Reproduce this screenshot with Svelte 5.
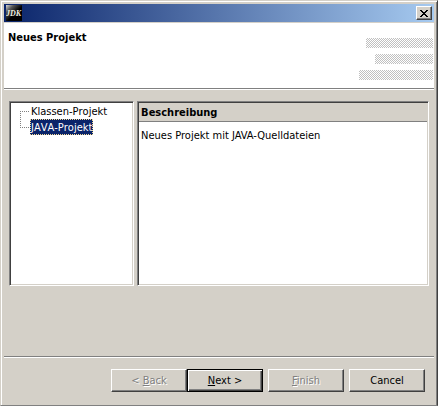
<script lang="ts">
	interface ProjectType {
		name: string;
		description: string;
	}

	const projectTypes: ProjectType[] = [
		{ name: 'Klassen-Projekt', description: 'Neues Projekt mit Klassen' },
		{ name: 'JAVA-Projekt', description: 'Neues Projekt mit JAVA-Quelldateien' },
	];

	let selected = $state(1);
	let description = $derived(projectTypes[selected].description);
</script>

<main class="window">
	<div class="title-bar">
		<svg class="app-icon" width="16" height="16" viewBox="0 0 16 16" aria-hidden="true">
			<defs>
				<linearGradient id="icon-shade" x1="0" y1="0" x2="1" y2="1">
					<stop offset="0" stop-color="#d8d8d8" />
					<stop offset="0.25" stop-color="#555" />
					<stop offset="0.55" stop-color="#000" />
				</linearGradient>
			</defs>
			<rect width="16" height="16" fill="url(#icon-shade)" />
			<text x="0" y="11" class="icon-text">JDK</text>
		</svg>
		<button class="close" type="button" aria-label="Close">
			<svg width="8" height="7" viewBox="0 0 8 7" shape-rendering="crispEdges" aria-hidden="true">
				<path d="M0 0h2v1h1v1h2v-1h1v-1h2v1h-1v1h-1v1h-1v1h1v1h1v1h1v1h-2v-1h-1v-1h-2v1h-1v1h-2v-1h1v-1h1v-1h1v-1h-1v-1h-1v-1h-1z" />
			</svg>
		</button>
	</div>

	<header class="banner">
		<h1>Neues Projekt</h1>
		<div class="stripes" aria-hidden="true">
			<span class="stripe medium"></span>
			<span class="stripe short"></span>
			<span class="stripe long"></span>
		</div>
	</header>

	<div class="content">
		<ul class="tree sunken">
			{#each projectTypes as type, i}
				<li>
					<svg width="10" height="16" viewBox="0 0 10 16" shape-rendering="crispEdges" aria-hidden="true">
						<path d="M0 8.5h10" />
						{#if i > 0}<path d="M0.5 0v8" />{/if}
						{#if i < projectTypes.length - 1}<path d="M0.5 8v8" />{/if}
					</svg>
					<button type="button" class:selected={i === selected} onclick={() => (selected = i)}>{type.name}</button>
				</li>
			{/each}
		</ul>
		<section class="details sunken">
			<h2>Beschreibung</h2>
			<p>{description}</p>
		</section>
	</div>

	<footer class="actions">
		<div class="pair">
			<button type="button" disabled>&lt; <u>B</u>ack</button>
			<button type="button" class="default"><u>N</u>ext &gt;</button>
		</div>
		<button type="button" disabled><u>F</u>inish</button>
		<button type="button">Cancel</button>
	</footer>
</main>

<style>
	:global(body) {
		background: #d4d0c8;
	}

	.window {
		box-sizing: border-box;
		min-height: 100vh;
		display: flex;
		flex-direction: column;
		padding: 2px 2px 0;
		border: 1px solid;
		border-color: #d4d0c8 #404040 #808080 #d4d0c8;
		box-shadow: inset 1px 1px #fff, inset -1px 0 #808080;
		background: #d4d0c8;
		color: #000;
		font-family: 'DejaVu Sans Condensed', Tahoma, sans-serif;
		font-size: 11px;
		line-height: 14px;
	}

	.title-bar {
		display: flex;
		align-items: center;
		justify-content: space-between;
		height: 18px;
		margin: 1px 1px 0;
		padding: 0 2px;
		background: linear-gradient(to right, #0a246a, #a6caf0);
	}

	.icon-text {
		font: italic bold 8px 'Liberation Serif', serif;
		fill: #f0f0e0;
	}

	button {
		box-sizing: border-box;
		padding: 0;
		border: 1px solid;
		border-color: #fff #404040 #404040 #fff;
		border-radius: 0;
		box-shadow: inset -1px -1px #808080;
		background: #d4d0c8;
		color: #000;
		font: inherit;
	}

	.close {
		display: flex;
		align-items: center;
		justify-content: center;
		width: 16px;
		height: 14px;
	}

	.banner {
		display: flex;
		justify-content: space-between;
		margin: 1px 1px 0;
		padding: 8px 1px 8px 4px;
		border-bottom: 1px solid #808080;
		box-shadow: 0 1px #fff;
		background: #fff;
	}

	h1,
	h2 {
		margin: 0;
		font-size: 11px;
		font-weight: bold;
	}

	.stripes {
		display: flex;
		flex-direction: column;
		align-items: flex-end;
		gap: 6px;
		padding-top: 7px;
	}

	.stripe {
		height: 10px;
		background: repeating-conic-gradient(#c0c0c0 0 25%, #fff 0 50%) 0 0 / 2px 2px;
	}

	.short {
		width: 58px;
	}

	.medium {
		width: 67px;
	}

	.long {
		width: 74px;
	}

	.content {
		display: grid;
		grid-template-columns: 3fr 7fr;
		gap: 3px;
		flex: 1;
		padding: 12px 6px 70px;
	}

	.sunken {
		border: 1px solid;
		border-color: #808080 #fff #fff #808080;
		box-shadow: inset 1px 1px #404040, inset -1px -1px #d4d0c8;
		background: #fff;
	}

	.tree {
		margin: 0;
		padding: 1px 1px 1px 10px;
		font-kerning: none;
		list-style: none;
	}

	.tree li {
		display: flex;
		height: 16px;
	}

	.tree path {
		fill: none;
		stroke: #808080;
		stroke-dasharray: 1 1;
	}

	.tree button {
		padding: 1px 0 0;
		border: 1px dotted transparent;
		box-shadow: none;
		background: none;
		line-height: 13px;
		white-space: nowrap;
	}

	.tree .selected {
		border-color: #f5db95;
		background: #0a246a;
		color: #fff;
	}

	.details {
		padding: 1px;
	}

	h2 {
		padding: 3px 2px 1px;
		border-bottom: 1px solid #808080;
		background: #d4d0c8;
	}

	.details p {
		margin: 0;
		padding: 7px 2px;
	}

	.actions {
		display: flex;
		justify-content: flex-end;
		gap: 5px;
		margin: 0 1px;
		padding: 12px 9px 13px;
		border-top: 1px solid #808080;
		box-shadow: inset 0 1px #fff;
	}

	.pair {
		display: flex;
	}

	.actions button {
		width: 76px;
		height: 23px;
	}

	.actions button:disabled {
		color: #808080;
		text-shadow: 1px 1px #fff;
	}

	.actions .default {
		border-color: #000;
		box-shadow: inset 1px 1px #fff, inset -1px -1px #404040, inset -2px -2px #808080;
	}
</style>
